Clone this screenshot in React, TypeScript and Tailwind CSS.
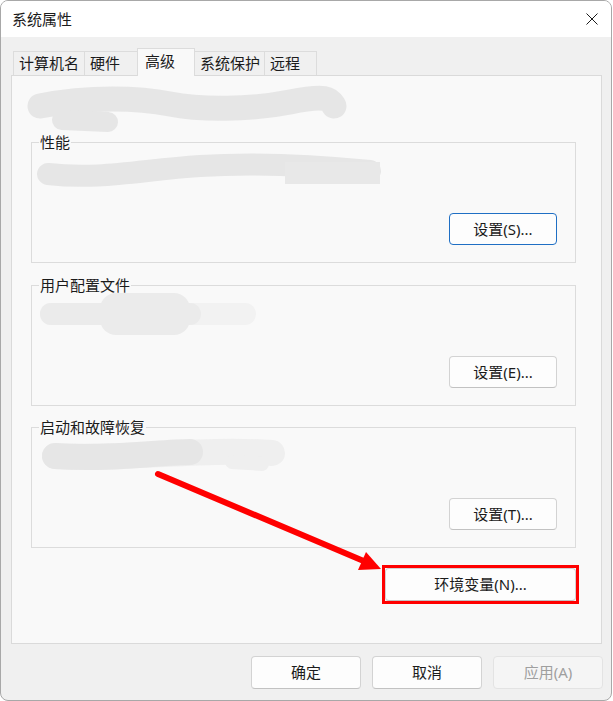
import React from "react";

function Btn({ label, w = "w-[108px]", focus = false, disabled = false }: { label: string; w?: string; focus?: boolean; disabled?: boolean }) {
  const base = "h-[32px] rounded-[4px] flex items-center justify-center text-[15px] leading-none " + w;
  if (disabled) {
    return <div className={base + " bg-[#f5f5f5] border border-[#e3e3e3] text-[#9f9f9f]"}>{label}</div>;
  }
  if (focus) {
    return <div className={base + " bg-[#fdfdfd] border-[1.5px] border-[#1f6fc4] text-[#1b1b1b]"}>{label}</div>;
  }
  return <div className={base + " bg-[#fdfdfd] border border-[#d3d3d3] border-b-[#c2c2c2] text-[#1b1b1b]"}>{label}</div>;
}

function Group({ title, children, className = "" }: { title: string; children?: React.ReactNode; className?: string }) {
  return (
    <div className={"relative ml-[19px] w-[545px] h-[121px] border border-[#dcdcdc] flex items-end justify-end pr-[18px] pb-[17px] " + className}>
      <span className="absolute left-[7px] -top-[12px] px-[1px] bg-[#f9f9f9] text-[15px] leading-[22px]">{title}</span>
      {children}
    </div>
  );
}

function Tab({ label, w, selected = false }: { label: string; w: string; selected?: boolean }) {
  if (selected) {
    return (
      <div className={"relative z-10 -ml-px h-[28px] -mb-px bg-[#f9f9f9] border-t border-l border-r border-[#dcdcdc] flex items-center justify-start pl-[7px] pb-[3px] " + w}>
        {label}
      </div>
    );
  }
  return (
    <div className={"-ml-px first:ml-0 h-[24px] bg-[#f0f0f0] border-t border-l border-r border-[#dcdcdc] flex items-center justify-start pl-[5px] " + w}>
      {label}
    </div>
  );
}

export default function App() {
  return (
    <div className="relative w-[613px] h-[701px] bg-white text-[15px] text-[#1b1b1b] font-['Noto_Sans','Noto_Sans_CJK_SC',sans-serif]">
      <div className="flex flex-col w-[612px] h-[701px] border border-[#a8a8a8] rounded-[8px] overflow-hidden bg-[#f0f0f0]">
        <div className="h-[36px] shrink-0 bg-white flex items-center justify-between pl-[11px] pr-[13px]">
          <span className="leading-none">系统属性</span>
          <svg width="12" height="12" viewBox="0 0 12 12">
            <path d="M0.5 0.5 L11.5 11.5 M11.5 0.5 L0.5 11.5" stroke="#1b1b1b" strokeWidth="1" />
          </svg>
        </div>
        <div className="px-[10px] pt-[11px]">
          <div className="flex items-end pl-[2px] h-[27px]">
            <Tab label="计算机名" w="w-[72px]" />
            <Tab label="硬件" w="w-[54px]" />
            <Tab label="高级" w="w-[58px]" selected />
            <Tab label="系统保护" w="w-[71px]" />
            <Tab label="远程" w="w-[53px]" />
          </div>
          <div className="w-[591px] h-[569px] border border-[#dadada] bg-[#f9f9f9] flex flex-col">
            <Group title="性能" className="mt-[66px]">
              <Btn label="设置(S)..." focus />
            </Group>
            <Group title="用户配置文件" className="mt-[22px]">
              <Btn label="设置(E)..." />
            </Group>
            <Group title="启动和故障恢复" className="mt-[21px]">
              <Btn label="设置(T)..." />
            </Group>
            <div className="flex justify-end pr-[22px] mt-[17px]">
              <div className="w-[197px] h-[39px] border-[3px] border-[#ff0000] p-[0px]">
                <Btn label="环境变量(N)..." w="w-full !h-[33px]" />
              </div>
            </div>
          </div>
        </div>
        <div className="flex justify-end pr-[8px] mt-[12px] gap-[11px]">
          <Btn label="确定" w="w-[110px] !h-[33px]" />
          <Btn label="取消" w="w-[110px] !h-[33px]" />
          <Btn label="应用(A)" w="w-[110px] !h-[33px]" disabled />
        </div>
      </div>
      <svg className="absolute inset-0 pointer-events-none" width="613" height="701" viewBox="0 0 613 701">
        <path d="M40 106 C 90 96, 140 98, 170 104 S 250 110, 290 102 S 330 100, 334 106" stroke="#e6e6e6" strokeWidth="25" strokeLinecap="round" fill="none" />
        <path d="M62 120 L 108 122" stroke="#e6e6e6" strokeWidth="20" strokeLinecap="round" fill="none" />
        <path d="M48 174 C 100 180, 140 170, 200 166 S 320 166, 370 171" stroke="#e6e6e6" strokeWidth="22" strokeLinecap="round" fill="none" />
        <rect x="285" y="162" width="95" height="22" fill="#e8e8e8" />
        <path d="M51 314 L 245 314" stroke="#f2f2f2" strokeWidth="22" strokeLinecap="round" fill="none" />
        <path d="M51 314 L 190 314" stroke="#ebebeb" strokeWidth="22" strokeLinecap="round" fill="none" />
        <rect x="100" y="293" width="90" height="42" rx="16" fill="#ebebeb" />
        <rect x="150" y="303" width="40" height="22" fill="#ebebeb" />
        <path d="M55 456 C 120 460, 200 448, 272 453" stroke="#efefef" strokeWidth="26" strokeLinecap="round" fill="none" />
        <path d="M55 456 C 110 460, 160 452, 190 452" stroke="#e6e6e6" strokeWidth="26" strokeLinecap="round" fill="none" />
        <path d="M232 462 L 262 464" stroke="#efefef" strokeWidth="14" strokeLinecap="round" fill="none" />
        <path d="M158 474 L 366 562" stroke="#ff0000" strokeWidth="6" strokeLinecap="round" fill="none" />
        <polygon points="381,569 358,570 366,552" fill="#ff0000" />
      </svg>
    </div>
  );
}
